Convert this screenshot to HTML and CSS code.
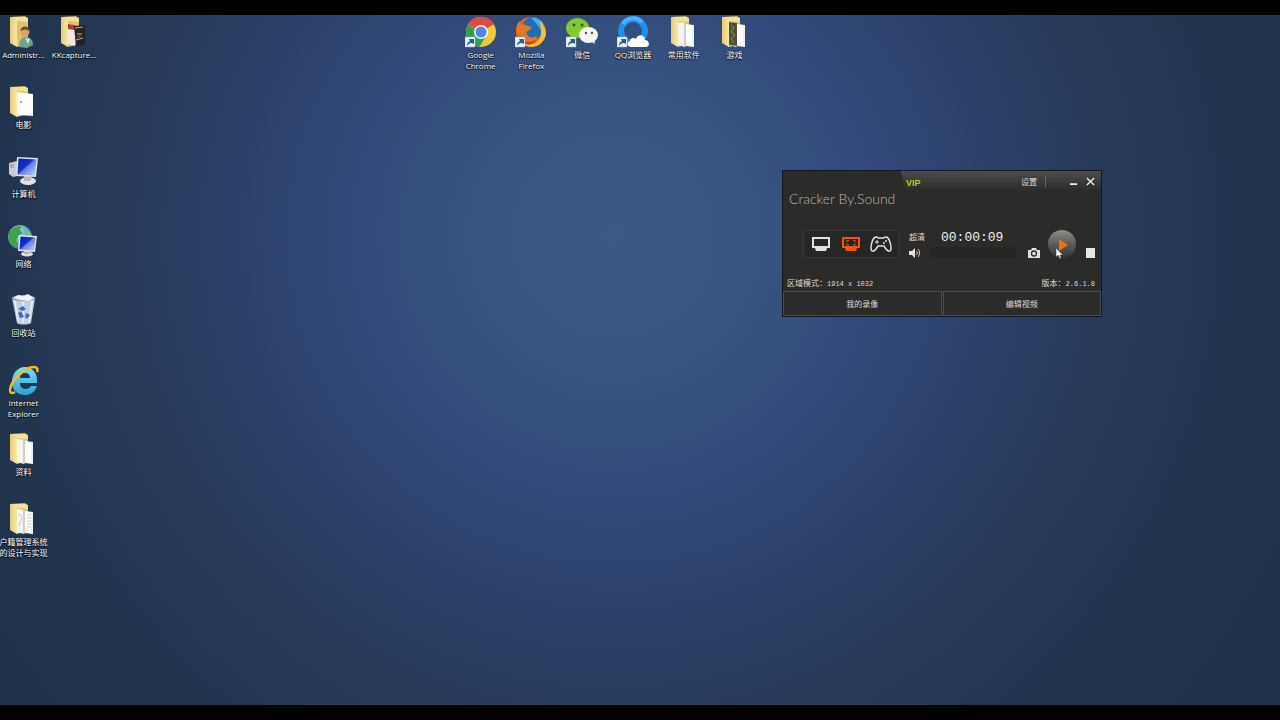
FILE: index.html
```html
<!DOCTYPE html>
<html lang="zh-CN">
<head>
    <meta charset="UTF-8">
    <meta name="viewport" content="width=device-width, initial-scale=1.0">
    <title>桌面</title>
    <link rel="stylesheet" href="styles.css">
</head>
<body>

    <!-- shared icon parts -->
    <svg class="sprite" aria-hidden="true">
        <defs>
            <linearGradient id="gFlap" x1="0" x2="1" y1="0" y2="0">
                <stop offset="0" stop-color="#e6ca70"/>
                <stop offset="1" stop-color="#f8eba4"/>
            </linearGradient>
            <linearGradient id="gScreen" x1="0" x2="1" y1="0" y2="1">
                <stop offset="0" stop-color="#0b1fa8"/>
                <stop offset="0.45" stop-color="#1532c8"/>
                <stop offset="0.5" stop-color="#5f7ee8"/>
                <stop offset="1" stop-color="#c4d2fb"/>
            </linearGradient>
            <linearGradient id="gIe" x1="0" x2="0" y1="0" y2="1">
                <stop offset="0" stop-color="#7fdcf8"/>
                <stop offset="1" stop-color="#27a5dc"/>
            </linearGradient>
            <linearGradient id="gPlay" x1="0" x2="0" y1="0" y2="1">
                <stop offset="0" stop-color="#8c8c8a"/>
                <stop offset="0.5" stop-color="#5c5c5a"/>
                <stop offset="1" stop-color="#343432"/>
            </linearGradient>
            <radialGradient id="gGlobe" cx="0.4" cy="0.3" r="0.7">
                <stop offset="0" stop-color="#b4e4fa"/>
                <stop offset="1" stop-color="#2478b8"/>
            </radialGradient>
        </defs>
        <symbol id="folder" viewBox="0 0 32 32">
            <path d="M3 1l15-.5 3 1.500V28L10 31z" fill="#dcc26a"/>
            <path d="M3 1l7 4v26l-7-4z" fill="url(#gFlap)"/>
            <path d="M4 1l14-.5 3 2V6L10 5z" fill="#f3e294"/>
        </symbol>
        <symbol id="papers" viewBox="0 0 32 32">
            <path d="M10 6l8 1v23l-1 1-7-2z" fill="#f4f4f0"/>
            <path d="M17 7v23" stroke="#b0a89c"/>
            <path d="M18 8l8 1v22l-8-1z" fill="#fff"/>
            <path d="M25 9v21" stroke="#dde4ee"/>
        </symbol>
        <symbol id="shortcut" viewBox="0 0 32 32">
            <path d="M0 21h10v10H0z" fill="#eef3fa" stroke="#9fb2cc" stroke-width=".5"/>
            <path d="M2 30c0-3 1-4 3-5l-1-2h5v5l-2-1c-2 0-4 1-5 3z" fill="#1f5cae"/>
        </symbol>
    </svg>

    <main class="desktop">
        <nav class="icons">
            <a class="icon" href="#">
                <svg viewBox="0 0 32 32">
                    <use href="#folder"/>
                    <path d="M12 31c0-7 3-10 7-10s7 3 7 8l-6 3z" fill="#6da58c"/>
                    <path d="M18 22l3 6 2-5z" fill="#d8e8e0"/>
                    <circle cx="18" cy="16" r="4.500" fill="#d7a373"/>
                    <path d="M13.500 15c0-6 9-6 9 0-3-2-6-2-9 0z" fill="#6b4a2c"/>
                </svg>
                <span>Administr...</span>
            </a>
            <a class="icon" href="#">
                <svg viewBox="0 0 32 32">
                    <use href="#folder"/>
                    <path d="M10 8l7 1v21l-7-2z" fill="#f1e9e6"/>
                    <path d="M10 8l7 1v5l-7-1z" fill="#c8322c"/>
                    <path d="M16 10l11-1v20l-9 1z" fill="#27221f"/>
                    <path d="M17 12l8-1M19 18h5M18 24l7-2" stroke="#b9aca2"/>
                    <path d="M18 22l3-3 3 2z" fill="#8c3a30"/>
                </svg>
                <span>KKcapture...</span>
            </a>
            <a class="icon top-group" href="#">
                <svg viewBox="0 0 32 32">
                    <circle cx="16" cy="16" r="15" fill="#f7c933"/>
                    <path d="M16 16L3 8.500a15 15 0 0 1 26-.500z" fill="#dd4b3e"/>
                    <path d="M3 8.500a15 15 0 0 0 11.500 22.400L21 20z" fill="#30a04f"/>
                    <path d="M16 8.500h13.500L29 8a15 15 0 0 0-13-7z" fill="#dd4b3e"/>
                    <circle cx="16" cy="16" r="7" fill="#f3f6f9"/>
                    <circle cx="16" cy="16" r="5.500" fill="#4a86e8"/>
                    <use href="#shortcut"/>
                </svg>
                <span>Google Chrome</span>
            </a>
            <a class="icon" href="#">
                <svg viewBox="0 0 32 32">
                    <circle cx="16" cy="16" r="15" fill="#e66a17"/>
                    <circle cx="18" cy="12" r="11" fill="#1d6fb8"/>
                    <path d="M16 2c5-1 9 1 12 5l-2 7-5-7z" fill="#4aaee0"/>
                    <path d="M1 14C1 9 4 6 5 5l1 4c3-1 5 0 7 1l4 1-2 3-4 2 2 4c4 3 8 1 9-1 0 6-7 9-12 5z" fill="#e8761d"/>
                    <path d="M25 5c6 5 8 14 3 20-5 7-15 8-21 2 9 4 18-1 19-9 0-3 0-8-1-13z" fill="#f9bd30"/>
                    <path d="M4 20c4 6 11 8 17 4-3 6-13 7-17-4z" fill="#c8401a"/>
                    <use href="#shortcut"/>
                </svg>
                <span>Mozilla Firefox</span>
            </a>
            <a class="icon" href="#">
                <svg viewBox="0 0 32 32">
                    <path d="M4 19l-1 6 6-4z" fill="#7ac52b"/>
                    <ellipse cx="11.500" cy="12" rx="11.500" ry="10" fill="#83cb2d"/>
                    <circle cx="8" cy="9" r="1.500" fill="#2e5a14"/>
                    <circle cx="16" cy="9" r="1.500" fill="#2e5a14"/>
                    <path d="M24 25l5 3-1-6z" fill="#eceef0"/>
                    <ellipse cx="22.500" cy="19" rx="9.500" ry="8" fill="#f4f5f6"/>
                    <circle cx="20" cy="17" r="1.200" fill="#555"/>
                    <circle cx="26" cy="17" r="1.200" fill="#555"/>
                    <use href="#shortcut"/>
                </svg>
                <span>微信</span>
            </a>
            <a class="icon" href="#">
                <svg viewBox="0 0 32 32">
                    <circle cx="16" cy="15" r="12" fill="none" stroke="#1f8ff0" stroke-width="6"/>
                    <path d="M6 8C9 2 19 0 25 6" fill="none" stroke="#48b2fa" stroke-width="4"/>
                    <path d="M14 31c-4 0-5-5-1-6 0-3 4-4 6-2 1-5 9-5 9 1 5 0 5 7 1 7z" fill="#fff"/>
                    <use href="#shortcut"/>
                </svg>
                <span>QQ浏览器</span>
            </a>
            <a class="icon" href="#">
                <svg viewBox="0 0 32 32"><use href="#folder"/><use href="#papers"/></svg>
                <span>常用软件</span>
            </a>
            <a class="icon" href="#">
                <svg viewBox="0 0 32 32">
                    <use href="#folder"/><use href="#papers"/>
                    <path d="M10 6l8 1v23l-8-1z" fill="#4c5138"/>
                    <path d="M12 9l3 3-3 4 4 3-4 4 3 4" fill="none" stroke="#9a8c58"/>
                </svg>
                <span>游戏</span>
            </a>

            <a class="icon new-row" href="#">
                <svg viewBox="0 0 32 32">
                    <use href="#folder"/>
                    <path d="M10 6l16 2v22l-14-1-2 1z" fill="#fdfdfd"/>
                    <circle cx="14" cy="16" r="1" fill="#7c8ba0"/>
                </svg>
                <span>电影</span>
            </a>
            <a class="icon new-row" href="#">
                <svg viewBox="0 0 32 32">
                    <path d="M2 8l8-2v15l-4 1-4-3z" fill="#c9ccd0"/>
                    <path d="M3 10h4M3 12h4" stroke="#8b9096"/>
                    <ellipse cx="21" cy="26" rx="8" ry="4" fill="#e2e4e6"/>
                    <path d="M17 20h7v6h-7z" fill="#b4b8be"/>
                    <path d="M10 2l21 1-2 19-20-1z" fill="#dfe2e8"/>
                    <path d="M11.500 3.500l18 1-2 16-17-1z" fill="url(#gScreen)"/>
                </svg>
                <span>计算机</span>
            </a>
            <a class="icon new-row" href="#">
                <svg viewBox="0 0 32 32">
                    <circle cx="13" cy="12" r="12" fill="url(#gGlobe)"/>
                    <path d="M2 8c2-5 7-7 12-7l-1 4 3 3-5 3-2 5 3 4-3 3C3 20 0 14 2 8z" fill="#43a047"/>
                    <path d="M18 4c3 1 6 4 7 7l-4-1z" fill="#7cc46a"/>
                    <ellipse cx="20" cy="29" rx="6" ry="2.500" fill="#dedfe2"/>
                    <path d="M17 24h6v5h-6z" fill="#b4b8be"/>
                    <path d="M12 10l18 1-2 16-17-1z" fill="#e2e5ea"/>
                    <path d="M13.500 11.500l15 1-1.500 13-14.500-1z" fill="url(#gScreen)"/>
                </svg>
                <span>网络</span>
            </a>
            <a class="icon new-row" href="#">
                <svg viewBox="0 0 32 32">
                    <path d="M5 4h23l-4 25c-3 2-12 2-14 0z" fill="#c3cfdd"/>
                    <path d="M8 7l3 20M25 7l-3 21M16 8v21" stroke="#e9eff6" stroke-width="1.500"/>
                    <ellipse cx="16.500" cy="4" rx="12" ry="3" fill="#8798ac"/>
                    <path d="M6 4l5-3 5 1 5-2 6 4-5 3-9-1z" fill="#f1f3f4"/>
                    <path d="M11 15l5-3 3 3-3 2zM11 19l3-2 3 6-4 1zM19 19l4 2-3 4-2-2z" fill="#4568b8"/>
                </svg>
                <span>回收站</span>
            </a>
            <a class="icon new-row" href="#">
                <svg viewBox="0 0 32 32">
                    <path d="M30 19H13c0 4 2 6 6 6 2 0 4-1 5-3h6c-2 6-6 9-12 9C10 31 5 26 5 18S10 3 18 3c8 0 13 7 12 16zM13 14h10c0-3-2-5-5-5s-5 2-5 5z" fill="url(#gIe)"/>
                    <path d="M30 8c1-3 0-5-3-5C18 3 4 16 3 26c0 3 2 4 5 2" fill="none" stroke="#f4bd1c" stroke-width="2.500"/>
                </svg>
                <span>Internet Explorer</span>
            </a>
            <a class="icon new-row" href="#">
                <svg viewBox="0 0 32 32"><use href="#folder"/><use href="#papers"/></svg>
                <span>资料</span>
            </a>
            <a class="icon new-row" href="#">
                <svg viewBox="0 0 32 32">
                    <use href="#folder"/><use href="#papers"/>
                    <path d="M12 11l3 3-3 9M20 12h4M20 15h4M20 18h4M20 21h4M20 24h4" fill="none" stroke="#c3c5cc"/>
                </svg>
                <span>户籍管理系统的设计与实现</span>
            </a>
        </nav>

        <section class="recorder">
            <header class="titlebar">
                <div class="tab">
                    <a class="vip" href="#">VIP</a>
                    <button class="settings">设置</button>
                    <button class="win-btn" aria-label="最小化">
                        <svg viewBox="0 0 10 10"><path d="M1 8h8" stroke="#eee" stroke-width="2"/></svg>
                    </button>
                    <button class="win-btn" aria-label="关闭">
                        <svg viewBox="0 0 10 10"><path d="M1 1l8 8M9 1l-8 8" stroke="#eee" stroke-width="1.500"/></svg>
                    </button>
                </div>
            </header>

            <p class="brand">Cracker By.Sound</p>

            <div class="controls">
                <div class="modes">
                    <button aria-label="全屏模式">
                        <svg viewBox="0 0 22 18"><path d="M3 3h16v9H3z" fill="none" stroke="#dfe3df" stroke-width="2"/><path d="M5 13h12l-1 3H6z" fill="#dfe3df"/></svg>
                    </button>
                    <button aria-label="区域模式">
                        <svg viewBox="0 0 22 18"><path d="M3 3h16v9H3z" fill="none" stroke="#f0560f" stroke-width="2"/><path d="M5 13h12l-1 3H6z" fill="#f0560f"/><path d="M7 7V5.500h2M13 5.500h2V7M7 8.500V10h2M13 10h2V8.500" fill="none" stroke="#f0560f"/></svg>
                    </button>
                    <button aria-label="游戏模式">
                        <svg viewBox="0 0 22 18"><path d="M6 2c2 0 2 1 3 1h4c1 0 1-1 3-1 3 0 5 7 5 11 0 4-3 4-5 1l-2-3H8l-2 3c-2 3-5 3-5-1C1 9 3 2 6 2z" fill="none" stroke="#dfe3df" stroke-width="1.500"/><path d="M7 5v4M5 7h4" stroke="#dfe3df"/><circle cx="14" cy="8" r="1" fill="#dfe3df"/><circle cx="16" cy="6" r="1" fill="#dfe3df"/></svg>
                    </button>
                </div>
                <div class="sound">
                    <span>超清</span>
                    <button aria-label="音量">
                        <svg viewBox="0 0 12 10"><path d="M0 3h3l3-3v10L3 7H0z" fill="#e4e4e4"/><path d="M7.500 3c1 1 1 3 0 4M9 1c2 2 2 6 0 8" fill="none" stroke="#d0d0d0"/></svg>
                    </button>
                </div>
                <div class="timer">
                    <time>00:00:09</time>
                    <div class="level"></div>
                </div>
                <button class="small-btn" aria-label="截图">
                    <svg viewBox="0 0 12 10"><path d="M0 2h3l1-2h4l1 2h3v8H0z" fill="#e0e0de"/><circle cx="6" cy="5.500" r="2.500" fill="#e0e0de" stroke="#2b2b29" stroke-width="1.300"/></svg>
                </button>
                <button class="play" aria-label="暂停">
                    <svg viewBox="0 0 28 28"><circle cx="14" cy="14" r="14" fill="url(#gPlay)"/><path d="M11 9l9 6-9 6z" fill="#f07010"/></svg>
                    <svg class="cursor" viewBox="0 0 8 12"><path d="M1 0v9l2-2 2 4 1-1-1-3h3z" fill="#fff" stroke="#222" stroke-width=".4"/></svg>
                </button>
                <button class="small-btn" aria-label="停止">
                    <svg viewBox="0 0 12 10"><path d="M2 0h9v10H2z" fill="#e6e6e2"/></svg>
                </button>
            </div>

            <div class="status">
                <span>区域模式：<b>1914 x 1032</b></span>
                <span>版本：<b>2.6.1.8</b></span>
            </div>

            <footer class="actions">
                <button>我的录像</button>
                <button>编辑视频</button>
            </footer>
        </section>
    </main>

</body>
</html>
```
FILE: styles.css
```css
* {
    box-sizing: border-box;
}
body {
    margin: 0;
    padding: 15px 0;
    min-height: 100vh;
    display: flex;
    background-color: #000;
    font-family: "Open Sans", "Noto Sans CJK SC", sans-serif;
    font-size: 8px;
    line-height: 11px;
    color: #fff;
}
button {
    padding: 0;
    border: none;
    background: none;
    color: inherit;
    font: inherit;
    cursor: pointer;
}
a {
    color: inherit;
    text-decoration: none;
}
svg {
    display: block;
}
.sprite {
    position: absolute;
    width: 0;
    height: 0;
}

/* Desktop */
.desktop {
    position: relative;
    flex: 1;
    display: flex;
    overflow: hidden;
    background: radial-gradient(circle at 48% 32%, #3b5987 0, #375482 140px, #32487a 270px, #2b4066 400px, #263959 500px, #22354f 620px, #20334c 800px);
}
.icons {
    flex: 1;
    display: grid;
    grid-template-columns: repeat(25, 1fr);
    grid-template-rows: repeat(9, 1fr);
    margin: 0 12px 64px -2px;
}
.icon {
    min-width: 0;
    min-height: 0;
    padding-top: 1px;
    display: flex;
    flex-direction: column;
    align-items: center;
    gap: 1px;
    text-align: center;
    text-shadow: 0 1px 1px #000, 0 0 2px #000;
}
.icon svg {
    width: 32px;
    height: 32px;
    flex: none;
}
.new-row {
    grid-column: 1;
}
.top-group {
    grid-column: 10;
}

/* Recorder window */
.recorder {
    position: absolute;
    left: 782px;
    top: 155px;
    width: 320px;
    display: flex;
    flex-direction: column;
    border: 1px solid #141822;
    background-color: #2b2b29;
    color: #dcdcdc;
}
.titlebar {
    display: flex;
    justify-content: flex-end;
}
.tab {
    width: 200px;
    height: 20px;
    padding: 0 6px 0 5px;
    display: flex;
    align-items: center;
    background: linear-gradient(#4c4c4b, #2b2b29);
    clip-path: polygon(0 0, 100% 0, 100% 100%, 5px 100%);
}
.vip {
    flex: 1;
    padding-top: 4px;
    font-family: "Liberation Sans", sans-serif;
    font-size: 9px;
    font-weight: bold;
    color: #b4cc28;
}
.settings {
    margin-right: 23px;
    padding-right: 8px;
    border-right: 1px solid #666;
}
.win-btn svg {
    width: 9px;
    height: 9px;
}
.win-btn + .win-btn {
    margin-left: 8px;
}
.brand {
    margin: 0 6px;
    font-family: Lato, sans-serif;
    font-size: 14px;
    font-weight: 300;
    line-height: 16px;
    color: #b8b8b6;
}
.controls {
    display: flex;
    align-items: flex-end;
    height: 51px;
    padding: 0 5px 0 20px;
}
.modes {
    display: flex;
    gap: 8px;
    padding: 4px 6px;
    border: 1px solid #383836;
    background-color: #262624;
}
.modes svg {
    width: 22px;
    height: 18px;
}
.sound {
    width: 31px;
    display: flex;
    flex-direction: column;
    gap: 6px;
    padding-left: 10px;
}
.sound svg {
    width: 12px;
    height: 10px;
}
.timer {
    width: 98px;
}
.timer time {
    display: block;
    padding-left: 11px;
    font-family: "Liberation Mono", monospace;
    font-size: 13px;
    line-height: 18px;
    color: #f0f0f0;
}
.level {
    width: 86px;
    height: 11px;
    background-color: #252523;
}
.small-btn svg {
    width: 12px;
    height: 10px;
}
.play {
    position: relative;
    margin: 0 8px;
}
.play svg {
    width: 28px;
    height: 28px;
}
.play .cursor {
    position: absolute;
    left: 7px;
    top: 18px;
    width: 8px;
    height: 12px;
}
.status {
    display: flex;
    justify-content: space-between;
    padding: 19px 6px 1px 4px;
}
.status b {
    font-family: "Liberation Mono", monospace;
    font-size: 7px;
    font-weight: normal;
}
.actions {
    display: flex;
    gap: 1px;
}
.actions button {
    flex: 1;
    height: 25px;
    border: 1px solid #4c4c4a;
}
```
